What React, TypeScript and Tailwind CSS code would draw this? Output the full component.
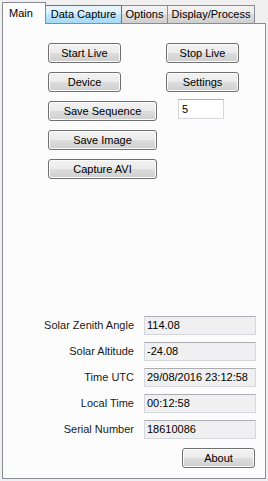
import React from 'react'

const font = { fontFamily: '"Liberation Sans", Arial, sans-serif' }

function Btn({ label, w }: { label: string; w: string }) {
  return (
    <button
      type="button"
      className={`${w} h-[20px] block shrink-0 rounded-[3px] border border-[#707070] bg-[linear-gradient(#f2f2f2_0%,#ebebeb_50%,#dddddd_50%,#cfcfcf_100%)] shadow-[inset_0_0_0_1px_#fcfcfc] text-[11px] leading-none text-black`}
    >
      {label}
    </button>
  )
}

function Field({ label, value }: { label: string; value: string }) {
  return (
    <div className="flex items-center h-[19px]">
      <div className="w-[132px] text-right text-[11px] text-[#1a1a1a] pr-[1px]">{label}</div>
      <div className="ml-[9px] w-[112px] h-[19px] border border-[#d5d7dc] border-t-[#abadb3] bg-[#f0f0f0] text-[11px] leading-[17px] pl-[2px] text-black">
        {value}
      </div>
    </div>
  )
}

export default function App() {
  return (
    <div className="w-[268px] h-[481px] bg-[#f0f0f0] flex flex-col px-[2px] pt-[2px] pb-[2px]" style={font}>
      {/* tab strip */}
      <div className="flex items-end h-[21px] relative z-10">
        <div className="w-[44px] border border-b-0 border-[#898c95] bg-[#fcfcfc] text-[11px] pl-[6px] pt-[2px] -mb-[1px] h-[22px]">
          Main
        </div>
        <div className="w-[76px] h-[18px] border border-b-0 border-l-0 border-[#3c7fb1] bg-[linear-gradient(#eaf6fd_0%,#d9f0fc_50%,#bee6fd_50%,#a7d9f5_100%)] text-[11px] text-center leading-[17px]">
          Data Capture
        </div>
        <div className="w-[46px] h-[18px] border border-b-0 border-l-0 border-[#898c95] bg-[linear-gradient(#f2f2f2_0%,#ebebeb_50%,#dddddd_50%,#cfcfcf_100%)] text-[11px] text-center leading-[17px]">
          Options
        </div>
        <div className="w-[87px] h-[18px] border border-b-0 border-l-0 border-[#898c95] bg-[linear-gradient(#f2f2f2_0%,#ebebeb_50%,#dddddd_50%,#cfcfcf_100%)] text-[11px] text-center leading-[17px]">
          Display/Process
        </div>
      </div>

      {/* tab page */}
      <div className="flex-1 border border-[#898c95] bg-[#fcfcfc] flex flex-col pt-[19px] pb-[10px]">
        <div className="flex flex-col gap-[9px] pl-[45px]">
          <div className="flex gap-[45px]">
            <Btn label="Start Live" w="w-[73px]" />
            <Btn label="Stop Live" w="w-[73px]" />
          </div>
          <div className="flex gap-[45px]">
            <Btn label="Device" w="w-[73px]" />
            <Btn label="Settings" w="w-[73px]" />
          </div>
          <div className="flex items-start">
            <Btn label="Save Sequence" w="w-[109px]" />
            <div className="ml-[21px] -mt-[2px] w-[46px] h-[20px] border border-[#d5d7dc] border-t-[#abadb3] bg-white text-[11px] leading-[18px] pl-[3px]">
              5
            </div>
          </div>
          <Btn label="Save Image" w="w-[109px]" />
          <Btn label="Capture AVI" w="w-[109px]" />
        </div>

        <div className="mt-auto flex flex-col gap-[7px]">
          <Field label="Solar Zenith Angle" value="114.08" />
          <Field label="Solar Altitude" value="-24.08" />
          <Field label="Time UTC" value="29/08/2016 23:12:58" />
          <Field label="Local Time" value="00:12:58" />
          <Field label="Serial Number" value="18610086" />
          <div className="flex justify-end pr-[10px] mt-[2px]">
            <Btn label="About" w="w-[73px]" />
          </div>
        </div>
      </div>
    </div>
  )
}
